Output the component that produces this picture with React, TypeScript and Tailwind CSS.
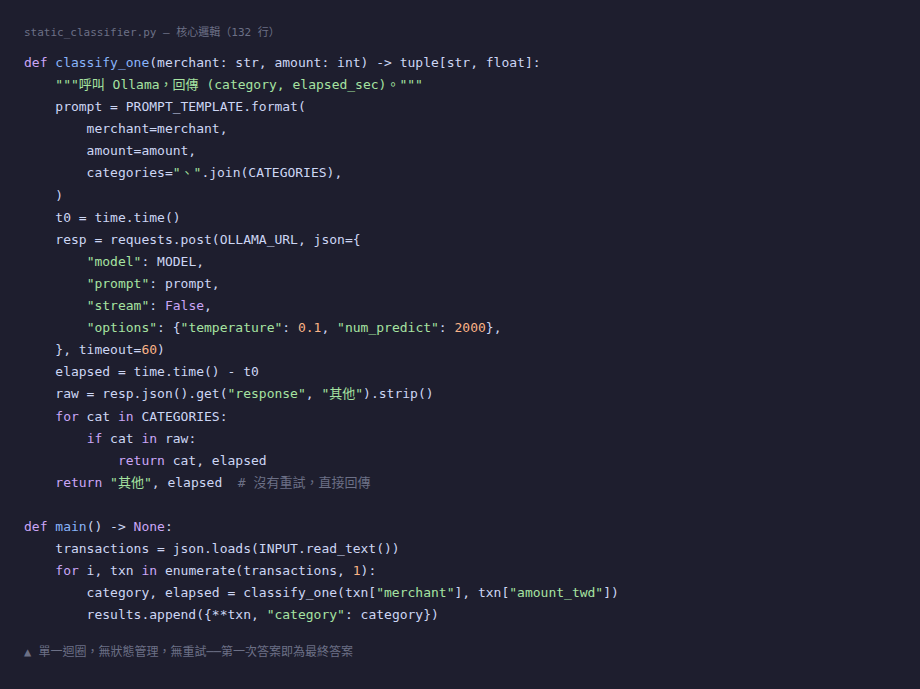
import React from "react";

type Seg = [string, string?];

const K = "text-[#cba6f7]"; // keyword
const F = "text-[#89b4fa]"; // function
const S = "text-[#a6e3a1]"; // string
const N = "text-[#fab387]"; // number
const C = "text-[#6c7086]"; // comment

const lines: Seg[][] = [
  [["def", K], [" "], ["classify_one", F], ["(merchant: str, amount: int) -> tuple[str, float]:"]],
  [["    "], ['"""呼叫 Ollama，回傳 (category, elapsed_sec)。"""', S]],
  [["    prompt = PROMPT_TEMPLATE.format("]],
  [["        merchant=merchant,"]],
  [["        amount=amount,"]],
  [["        categories="], ['"、"', S], [".join(CATEGORIES),"]],
  [["    )"]],
  [["    t0 = time.time()"]],
  [["    resp = requests.post(OLLAMA_URL, json={"]],
  [["        "], ['"model"', S], [": MODEL,"]],
  [["        "], ['"prompt"', S], [": prompt,"]],
  [["        "], ['"stream"', S], [": "], ["False", K], [","]],
  [["        "], ['"options"', S], [": {"], ['"temperature"', S], [": "], ["0.1", N], [", "], ['"num_predict"', S], [": "], ["2000", N], ["},"]],
  [["    }, timeout="], ["60", N], [")"]],
  [["    elapsed = time.time() - t0"]],
  [["    raw = resp.json().get("], ['"response"', S], [", "], ['"其他"', S], [").strip()"]],
  [["    "], ["for", K], [" cat "], ["in", K], [" CATEGORIES:"]],
  [["        "], ["if", K], [" cat "], ["in", K], [" raw:"]],
  [["            "], ["return", K], [" cat, elapsed"]],
  [["    "], ["return", K], [" "], ['"其他"', S], [", elapsed  "], ["# 沒有重試，直接回傳", C]],
  [[""]],
  [["def", K], [" "], ["main", F], ["() -> "], ["None", K], [":"]],
  [["    transactions = json.loads(INPUT.read_text())"]],
  [["    "], ["for", K], [" i, txn "], ["in", K], [" enumerate(transactions, "], ["1", N], ["):"]],
  [["        category, elapsed = classify_one(txn["], ['"merchant"', S], ["], txn["], ['"amount_twd"', S], ["])"]],
  [["        results.append({**txn, "], ['"category"', S], [": category})"]],
];

export default function App() {
  return (
    <div className="w-[920px] h-[689px] bg-[#1e1e2e] px-6 pt-[25px] overflow-hidden">
      <div
        className="text-[11px] leading-4 text-[#6c7086]"
        style={{ fontFamily: '"DejaVu Sans Mono", "Noto Sans CJK TC", monospace' }}
      >
        static_classifier.py — 核心邏輯（132 行）
      </div>
      <pre
        className="mt-[11px] text-[13px] leading-[1.7] text-[#cdd6f4] whitespace-pre"
        style={{ fontFamily: '"DejaVu Sans Mono", "Noto Sans CJK TC", monospace' }}
      >
        {lines.map((segs, i) => (
          <div key={i} className="h-[22.1px]">
            {segs.map(([t, cls], j) => (
              <span key={j} className={cls}>
                {t}
              </span>
            ))}
          </div>
        ))}
      </pre>
      <div
        className="mt-[16px] text-[12px] leading-5 text-[#6c7086]"
        style={{ fontFamily: '"DejaVu Sans Mono", "Noto Sans CJK TC", monospace' }}
      >
        <span className="text-[12px]">▲</span> 單一迴圈，無狀態管理，無重試──第一次答案即為最終答案
      </div>
    </div>
  );
}
